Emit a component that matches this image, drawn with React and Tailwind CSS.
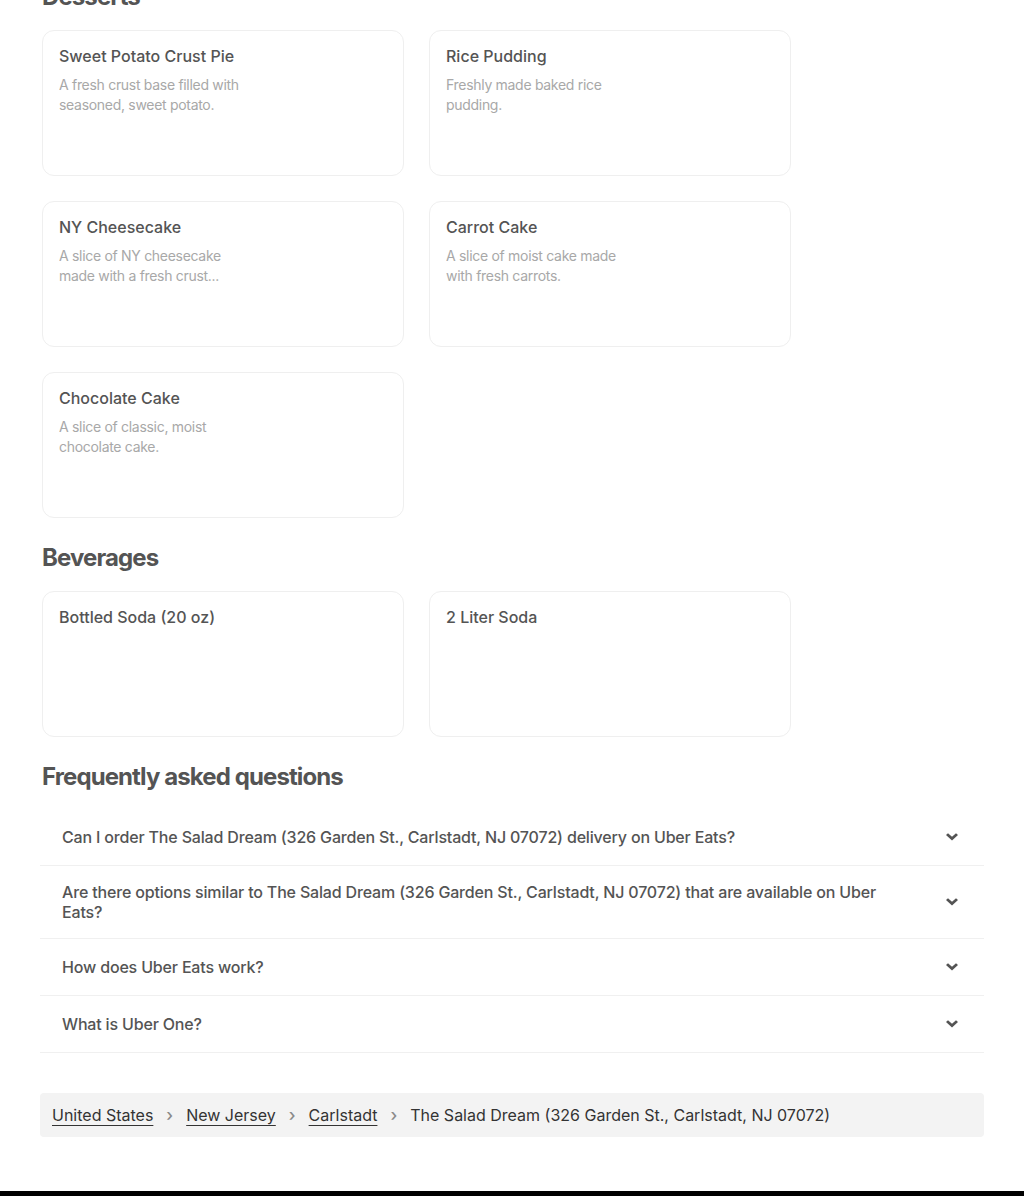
import React from 'react';

const desserts = [
  { name: 'Sweet Potato Crust Pie', desc: 'A fresh crust base filled with seasoned, sweet potato.' },
  { name: 'Rice Pudding', desc: 'Freshly made baked rice pudding.' },
  { name: 'NY Cheesecake', desc: 'A slice of NY cheesecake made with a fresh crust...' },
  { name: 'Carrot Cake', desc: 'A slice of moist cake made with fresh carrots.' },
  { name: 'Chocolate Cake', desc: 'A slice of classic, moist chocolate cake.' }
];

const beverages = [
  { name: 'Bottled Soda (20 oz)' },
  { name: '2 Liter Soda' }
];

const faqs = [
  'Can I order The Salad Dream (326 Garden St., Carlstadt, NJ 07072) delivery on Uber Eats?',
  'Are there options similar to The Salad Dream (326 Garden St., Carlstadt, NJ 07072) that are available on Uber Eats?',
  'How does Uber Eats work?',
  'What is Uber One?'
];

const crumbs = ['United States', 'New Jersey', 'Carlstadt'];

function Chevron() {
  return (
    <svg width="12" height="8" viewBox="0 0 12 8" className="shrink-0">
      <path d="M0 2.1 L2 0.2 L6 3.8 L10 0.2 L12 2.1 L6 7.4 Z" fill="#545454" />
    </svg>
  );
}

function ItemCard({ item }) {
  return (
    <div className="h-[146px] rounded-xl border border-[#efefef] bg-white px-4 pt-[15px]">
      <div className="text-[16px] leading-5 font-medium text-[#545454]">{item.name}</div>
      {item.desc && (
        <p className="mt-[9px] w-[188px] text-[14px] leading-5 text-[#a8a8a8] line-clamp-2 tracking-[-0.3px]">
          {item.desc}
        </p>
      )}
    </div>
  );
}

function Section({ title, items }) {
  return (
    <section>
      <h2 className="text-[24px] leading-8 font-bold tracking-[-0.9px] text-[#545454] pl-[2px]">{title}</h2>
      <div className="mt-[17px] grid grid-cols-[362px_362px] gap-[25px] pl-[2px]">
        {items.map((item) => (
          <ItemCard key={item.name} item={item} />
        ))}
      </div>
    </section>
  );
}

export default function App() {
  return (
    <div className="min-h-[1196px] bg-white flex flex-col" style={{ fontFamily: 'Inter, "Noto Sans", sans-serif' }}>
      <div className="w-[944px] ml-10 mt-[-19px] flex flex-col gap-6">
        <Section title="Desserts" items={desserts} />
        <Section title="Beverages" items={beverages} />

        {/* FAQ */}
        <section>
          <h2 className="text-[24px] leading-8 font-bold tracking-[-0.9px] text-[#545454] pl-[2px]">
            Frequently asked questions
          </h2>
          <div className="mt-[16px]">
            {faqs.map((q) => (
              <div key={q} className="flex items-center min-h-[57px] py-4 pl-[22px] pr-[26px] border-b border-[#f0f0f0]">
                <div className="flex-1 pr-[52px] text-[16px] leading-5 font-medium text-[#545454] tracking-[-0.17px]">{q}</div>
                <Chevron />
              </div>
            ))}
          </div>
        </section>

        {/* Breadcrumb */}
        <nav className="mt-[16px] bg-[#f3f3f3] rounded-sm px-3 py-3 flex items-center gap-[13px] text-[16px] leading-5 text-[#333333]">
          {crumbs.map((c) => (
            <React.Fragment key={c}>
              <a href="#" className="underline underline-offset-4 decoration-1">{c}</a>
              <span className="text-[#8a8a8a] text-[17px] font-medium">›</span>
            </React.Fragment>
          ))}
          <span>The Salad Dream (326 Garden St., Carlstadt, NJ 07072)</span>
        </nav>
      </div>

      <footer className="mt-[54px] flex-1 bg-black" />
    </div>
  );
}
